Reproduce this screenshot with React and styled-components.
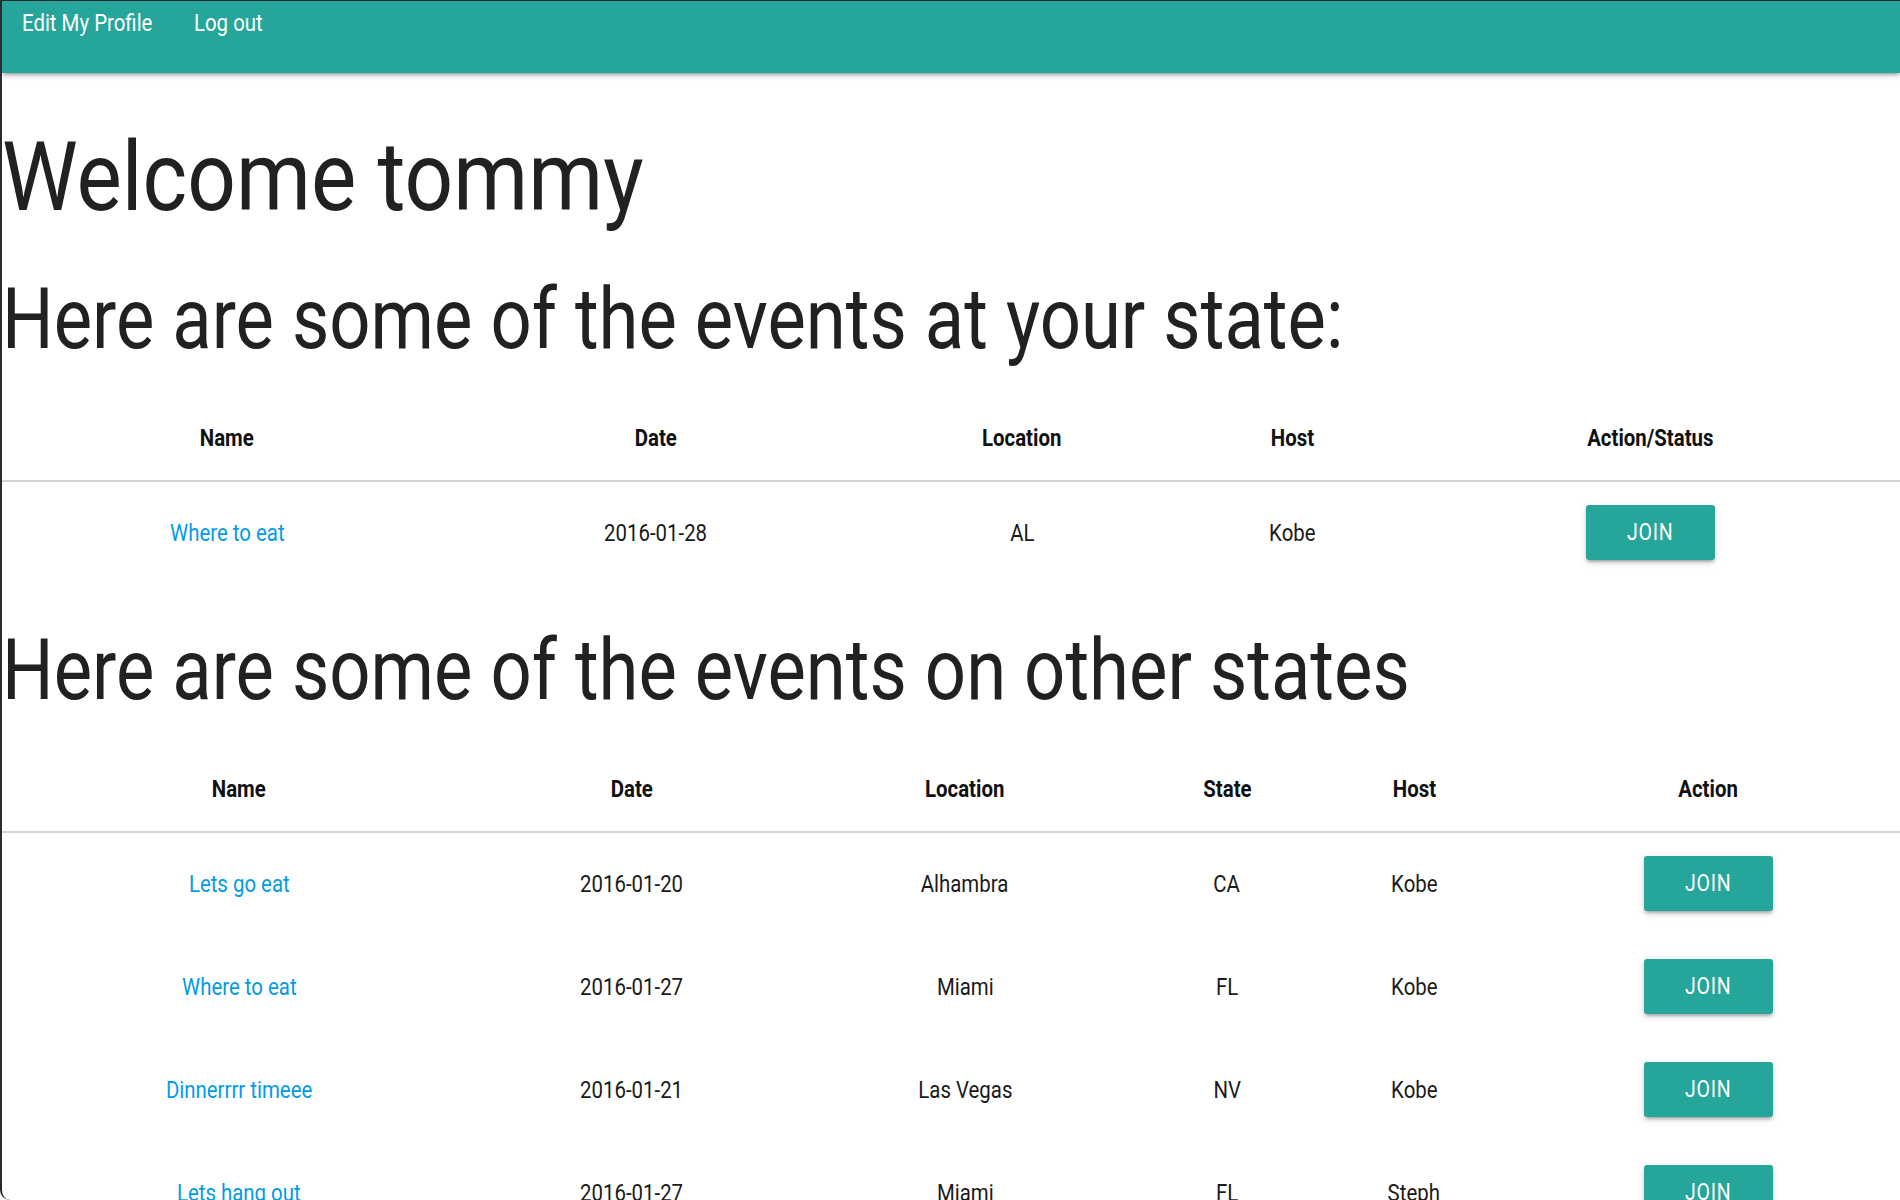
import React from "react";
import styled, { createGlobalStyle } from "styled-components";

const GlobalStyle = createGlobalStyle`
  html, body {
    margin: 0;
    padding: 0;
    background: #ffffff;
  }
  body {
    font-family: Roboto, "Liberation Sans", Arial, sans-serif;
    color: rgba(0, 0, 0, 0.87);
  }
  * { box-sizing: border-box; }
`;

const Frame = styled.div`
  height: 100vh;
  overflow: hidden;
  border-left: 2px solid #2b2b2b;
  border-top: 1px solid #2b2b2b;
  border-bottom-left-radius: 10px;
  background: #fff;
`;

const Nav = styled.nav`
  height: 72px;
  background: #26a69a;
  display: flex;
  align-items: flex-start;
  gap: 19px;
  padding-left: 20px;
  box-shadow: 0 3px 3px 0 rgba(0, 0, 0, 0.14), 0 2px 8px 0 rgba(0, 0, 0, 0.12),
    0 4px 2px -3px rgba(0, 0, 0, 0.2);
  position: relative;
  z-index: 1;
`;

const NavLink = styled.a`
  display: inline-block;
  color: #ffffff;
  font-size: 24px;
  line-height: 45px;
  text-decoration: none;
  cursor: pointer;
  white-space: nowrap;
  transform: scaleX(0.85);
  transform-origin: left center;
`;

const Main = styled.main`
  padding: 0;
`;

const Title = styled.h1`
  margin: 51px 0 0;
  font-size: 96px;
  line-height: 106px;
  font-weight: 400;
  color: #212121;
  white-space: nowrap;
  transform: scaleX(0.89);
  transform-origin: left center;
`;

const Subtitle = styled.h2`
  margin: ${(p) => p.$top}px 0 30px;
  font-size: 85px;
  line-height: 94px;
  font-weight: 400;
  color: #212121;
  white-space: nowrap;
  transform: scaleX(0.852);
  transform-origin: left center;
`;

const Table = styled.table`
  width: 100%;
  border-collapse: collapse;
  table-layout: fixed;
`;

const Col = styled.col`
  width: ${(p) => p.$w}px;
`;

const HeadRow = styled.tr`
  border-bottom: 2px solid #d4d4d4;
`;

const Th = styled.th`
  padding: 24px 8px;
  font-size: 24px;
  line-height: 36px;
  font-weight: 700;
  text-align: center;
  color: #111;
  white-space: nowrap;
`;

const Td = styled.td`
  padding: 23px 8px 25px;
  font-size: 24px;
  line-height: 36px;
  text-align: center;
  vertical-align: middle;
  color: #1a1a1a;
  white-space: nowrap;
`;

/* Condensed text: the UI's Roboto renders narrower than the installed face */
const Narrow = styled.span`
  display: inline-block;
  transform: scaleX(0.85);
  transform-origin: center;
`;

const EventLink = styled.a`
  color: #039be5;
  text-decoration: none;
  cursor: pointer;
`;

const JoinButton = styled.button`
  width: 129px;
  height: 55px;
  padding: 0;
  border: none;
  border-radius: 3px;
  background: #26a69a;
  color: #ffffff;
  font-family: Roboto, "Liberation Sans", Arial, sans-serif;
  font-size: 23px;
  line-height: 55px;
  letter-spacing: 0.8px;
  text-transform: uppercase;
  box-shadow: 0 3px 3px 0 rgba(0, 0, 0, 0.14), 0 2px 8px 0 rgba(0, 0, 0, 0.12),
    0 4px 2px -3px rgba(0, 0, 0, 0.2);
  cursor: pointer;
  vertical-align: middle;
`;

const localEvents = [
  { name: "Where to eat", date: "2016-01-28", location: "AL", host: "Kobe" },
];

const otherEvents = [
  { name: "Lets go eat", date: "2016-01-20", location: "Alhambra", state: "CA", host: "Kobe" },
  { name: "Where to eat", date: "2016-01-27", location: "Miami", state: "FL", host: "Kobe" },
  { name: "Dinnerrrr timeee", date: "2016-01-21", location: "Las Vegas", state: "NV", host: "Kobe" },
  { name: "Lets hang out", date: "2016-01-27", location: "Miami", state: "FL", host: "Steph" },
];

function Join() {
  return (
    <JoinButton>
      <Narrow>Join</Narrow>
    </JoinButton>
  );
}

function EventsTable({ columns, widths, rows, withState }) {
  return (
    <Table>
      <colgroup>
        {widths.map((w, i) => (
          <Col key={i} $w={w} />
        ))}
      </colgroup>
      <thead>
        <HeadRow>
          {columns.map((c) => (
            <Th key={c}>
              <Narrow>{c}</Narrow>
            </Th>
          ))}
        </HeadRow>
      </thead>
      <tbody>
        {rows.map((e, i) => (
          <tr key={i}>
            <Td>
              <Narrow>
                <EventLink>{e.name}</EventLink>
              </Narrow>
            </Td>
            <Td><Narrow>{e.date}</Narrow></Td>
            <Td><Narrow>{e.location}</Narrow></Td>
            {withState && (
              <Td><Narrow>{e.state}</Narrow></Td>
            )}
            <Td><Narrow>{e.host}</Narrow></Td>
            <Td><Join /></Td>
          </tr>
        ))}
      </tbody>
    </Table>
  );
}

export default function App() {
  return (
    <>
      <GlobalStyle />
      <Frame>
        <Nav>
          <NavLink>Edit My Profile</NavLink>
          <NavLink>Log out</NavLink>
        </Nav>
        <Main>
          <Title>Welcome tommy</Title>
          <Subtitle $top={42}>Here are some of the events at your state:</Subtitle>
          <EventsTable
            columns={["Name", "Date", "Location", "Host", "Action/Status"]}
            widths={[450, 408, 324, 216, 500]}
            rows={localEvents}
          />
          <Subtitle $top={38}>Here are some of the events on other states</Subtitle>
          <EventsTable
            columns={["Name", "Date", "Location", "State", "Host", "Action"]}
            widths={[474, 312, 354, 170, 204, 384]}
            rows={otherEvents}
            withState
          />
        </Main>
      </Frame>
    </>
  );
}
